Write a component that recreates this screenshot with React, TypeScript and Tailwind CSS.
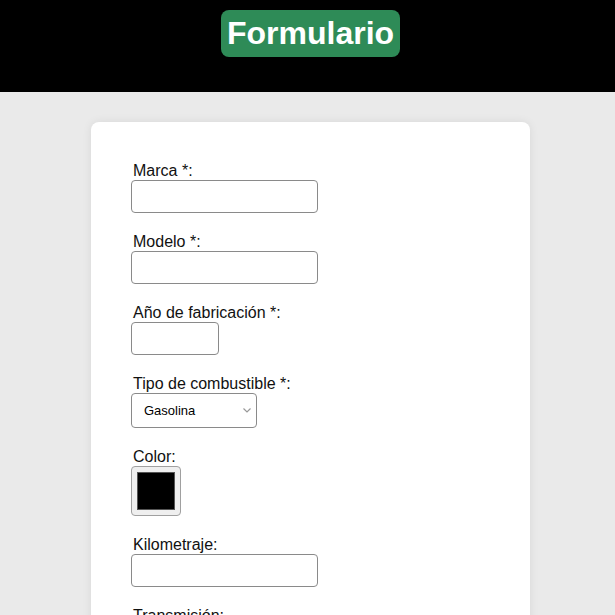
import React from "react";

function Field({ label, children }: { label: string; children: React.ReactNode }) {
  return (
    <div className="flex flex-col items-start mb-5">
      <label className="block text-[16px] leading-[18px] text-[#111] pl-[2px]">{label}</label>
      {children}
    </div>
  );
}

function Select({ options, value }: { options: string[]; value?: string }) {
  return (
    <div className="relative">
      <select
        defaultValue={value}
        className="appearance-none h-[35px] w-[126px] border border-[#8a8a8a] rounded-[4px] bg-white pl-[12px] text-[13px] text-black outline-none"
        style={{ fontFamily: '"Liberation Sans", Arial, sans-serif' }}
      >
        {options.map((o) => (
          <option key={o}>{o}</option>
        ))}
      </select>
      <svg
        className="pointer-events-none absolute right-[6px] top-[15px]"
        width="8"
        height="5"
        viewBox="0 0 8 5"
        fill="none"
      >
        <path d="M0.5 0.5 L4 4 L7.5 0.5" stroke="#999999" strokeWidth="1.2" />
      </svg>
    </div>
  );
}

export default function App() {
  const inputCls =
    "h-[33px] border border-[#8a8a8a] rounded-[4px] bg-white px-2 text-[13px] outline-none";
  return (
    <div className="min-h-[615px] bg-[#eaeaea]" style={{ fontFamily: '"Liberation Sans", Arial, sans-serif' }}>
      <header className="h-[92px] bg-black flex justify-center pl-[6px] pt-[10px]">
        <h1 className="h-[47px] px-[6px] bg-[#2e8b57] rounded-[8px] text-white font-bold text-[32px] leading-[47px]">
          Formulario
        </h1>
      </header>
      <div className="flex justify-center pl-[6px] pt-[30px]">
        <form className="w-[439px] bg-white rounded-[8px] shadow-[0_0_10px_rgba(0,0,0,0.08)] p-10">
          <Field label="Marca *:">
            <input type="text" className={`${inputCls} w-[187px]`} />
          </Field>
          <Field label="Modelo *:">
            <input type="text" className={`${inputCls} w-[187px]`} />
          </Field>
          <Field label="Año de fabricación *:">
            <input type="text" className={`${inputCls} w-[88px]`} />
          </Field>
          <Field label="Tipo de combustible *:">
            <Select options={["Gasolina", "Diésel", "Eléctrico", "Híbrido"]} value="Gasolina" />
          </Field>
          <Field label="Color:">
            <input
              type="color"
              defaultValue="#000000"
              className="w-[50px] h-[50px] border border-[#a0a0a0] rounded-[4px] bg-[#efefef] p-0 [&::-webkit-color-swatch-wrapper]:p-[5px] [&::-webkit-color-swatch]:border [&::-webkit-color-swatch]:border-[#555]"
            />
          </Field>
          <Field label="Kilometraje:">
            <input type="text" className={`${inputCls} w-[187px]`} />
          </Field>
          <Field label="Transmisión:">
            <Select options={["Manual", "Automática"]} />
          </Field>
        </form>
      </div>
    </div>
  );
}
